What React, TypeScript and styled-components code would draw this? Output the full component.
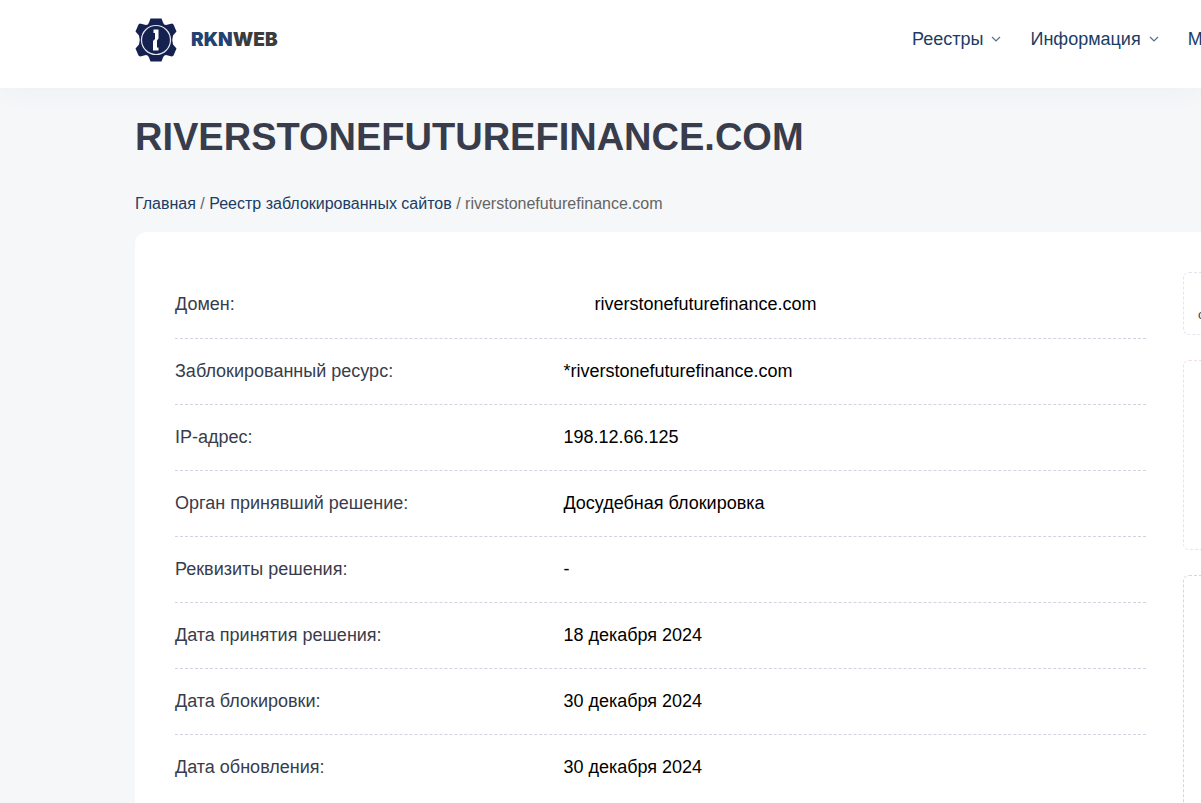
import React from "react";
import styled, { createGlobalStyle } from "styled-components";

const GlobalStyle = createGlobalStyle`
  * { box-sizing: border-box; }
  body {
    margin: 0;
    overflow-x: hidden;
    background: #f5f7f9;
    color: #383c4b;
    font-family: "Liberation Sans", Arial, sans-serif;
    font-size: 18px;
    line-height: 26px;
  }
  a { color: #203c64; text-decoration: none; }
`;

const Page = styled.div`
  overflow: hidden;
`;

const Header = styled.header`
  background: #fff;
  box-shadow: 0 0 30px rgba(82, 63, 105, 0.05);
`;

const Container = styled.div`
  width: calc(100% + 310px);
  padding: 0 40px 0 135px;
`;

const HeaderRow = styled(Container)`
  display: flex;
  align-items: center;
  justify-content: space-between;
  height: 88px;
  padding-bottom: 8px;
`;

const Brand = styled.a`
  display: flex;
  align-items: center;
  gap: 14px;
  color: #24426f;
  font-family: Inter, "Liberation Sans", sans-serif;
  font-size: 19px;
  font-weight: 900;
`;

const Dark = styled.span`
  color: #3c3c3c;
`;

const Nav = styled.nav`
  display: flex;
  gap: 29px;
  width: 559px;
  padding-bottom: 2px;
`;

const NavLink = styled.a`
  display: flex;
  align-items: center;
  gap: 8px;
`;

const Title = styled.h1`
  margin: 0;
  padding: 24px 0 30px;
  font-size: 38px;
  line-height: 50px;
  font-weight: 700;
  text-transform: uppercase;
`;

const Breadcrumbs = styled.nav`
  padding-bottom: 16px;
  color: #646464;
  font-size: 16px;
  line-height: 24px;
`;

const Card = styled.main`
  display: grid;
  grid-template-columns: minmax(0, 1fr) 248px;
  gap: 37px;
  padding: 40px;
  background: #fff;
  border-radius: 12px;
`;

const Facts = styled.dl`
  margin: 0;
`;

const Fact = styled.div`
  display: grid;
  grid-template-columns: 2fr 3fr;
  align-items: center;
  height: 66px;
  padding-bottom: 2px;
  border-bottom: 1px dashed #d1d3e0;

  &:first-child {
    height: 67px;
  }

  &:last-child {
    border-bottom-color: transparent;
  }
`;

const Value = styled.dd<{ $icon?: boolean }>`
  margin: 0;
  padding-left: ${(p) => (p.$icon ? 31 : 0)}px;
  color: #000;
`;

const Sidebar = styled.aside`
  display: flex;
  flex-direction: column;
  gap: 25px;
`;

const Panel = styled.section<{ $height: number; $color: string }>`
  min-height: ${(p) => p.$height}px;
  padding: 29px 14px 0;
  border: 1px dashed ${(p) => p.$color};
  border-radius: 6px;
  font-size: 13px;
`;

const Logo = () => (
  <svg width="42" height="44" viewBox="0 0 42 44" aria-hidden="true">
    <path
      fill="#15214f"
      d="M15.500.5h11l1.500 4q.7 2.500 3 2.500l6-1.500 1.500 1 3 7-3.500 4q-1.500 4.500 0 9l3.500 4-3 7-1.500 1-6-1.500q-2.300 0-3 2.500l-1.500 4h-11l-1.500-4q-.7-2.500-3-2.500l-6 1.500-1.500-1-3-7 3.500-4q1.500-4.500 0-9l-3.500-4 3-7 1.500-1 6 1.500q2.300 0 3-2.500z"
    />
    <circle cx="21" cy="22" r="14.5" fill="none" stroke="#e4e7f0" strokeWidth="1.2" />
    <path fill="#fff" d="M18.500 11.500h5v9l-1.500 2v7h1.500v3h-5.500v-9.500l2-2v-6h-1.500z" />
  </svg>
);

const Chevron = () => (
  <svg width="10" height="6" viewBox="0 0 10 6" fill="none" stroke="#5a6f8d" strokeWidth="1.2" aria-hidden="true">
    <path d="M1 1l4 4 4-4" />
  </svg>
);

const facts = [
  ["Домен:", "riverstonefuturefinance.com"],
  ["Заблокированный ресурс:", "*riverstonefuturefinance.com"],
  ["IP-адрес:", "198.12.66.125"],
  ["Орган принявший решение:", "Досудебная блокировка"],
  ["Реквизиты решения:", "-"],
  ["Дата принятия решения:", "18 декабря 2024"],
  ["Дата блокировки:", "30 декабря 2024"],
  ["Дата обновления:", "30 декабря 2024"],
];

export default function App() {
  return (
    <Page>
      <GlobalStyle />
      <Header>
        <HeaderRow>
          <Brand href="#">
            <Logo />
            <span>RKN<Dark>WEB</Dark></span>
          </Brand>
          <Nav>
            <NavLink href="#">Реестры <Chevron /></NavLink>
            <NavLink href="#">Информация <Chevron /></NavLink>
            <NavLink href="#">М</NavLink>
          </Nav>
        </HeaderRow>
      </Header>
      <Container>
        <Title>riverstonefuturefinance.com</Title>
        <Breadcrumbs>
          <a href="#">Главная</a> / <a href="#">Реестр заблокированных сайтов</a> / riverstonefuturefinance.com
        </Breadcrumbs>
        <Card>
          <Facts>
            {facts.map(([label, value], i) => (
              <Fact key={label}>
                <dt>{label}</dt>
                <Value $icon={i === 0}>{value}</Value>
              </Fact>
            ))}
          </Facts>
          <Sidebar>
            <Panel $height={63} $color="#e4e4ee">о</Panel>
            <Panel $height={190} $color="#fadcdc" />
            <Panel $height={240} $color="#c4dcf0" />
          </Sidebar>
        </Card>
      </Container>
    </Page>
  );
}
